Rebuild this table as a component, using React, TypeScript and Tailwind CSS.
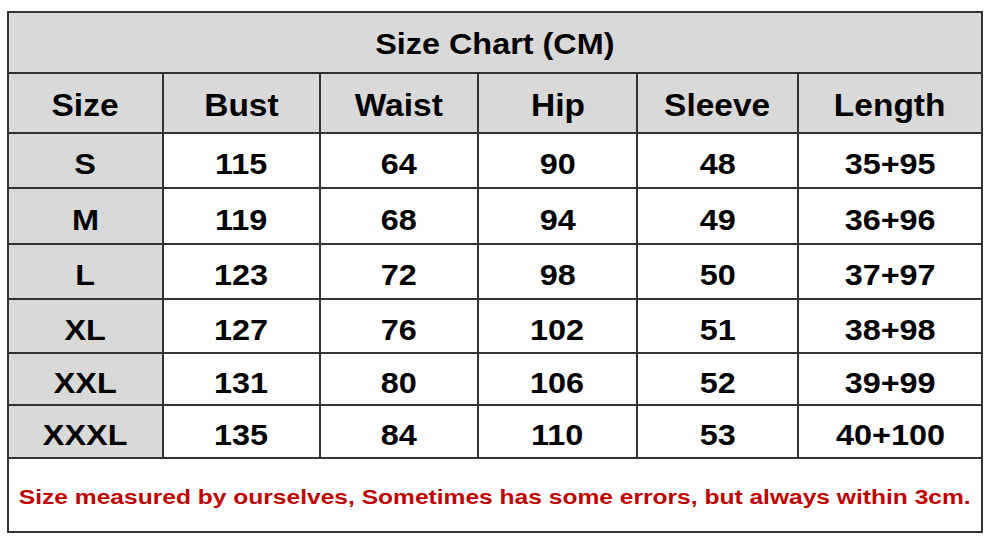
const columns = ['Size', 'Bust', 'Waist', 'Hip', 'Sleeve', 'Length']

const widths = ['w-[155px]', 'w-[157px]', 'w-[158px]', 'w-[159px]', 'w-[161px]', 'flex-1']

const rows = [
  { h: 'h-[55px]', cells: ['S', '115', '64', '90', '48', '35+95'] },
  { h: 'h-[56px]', cells: ['M', '119', '68', '94', '49', '36+96'] },
  { h: 'h-[55px]', cells: ['L', '123', '72', '98', '50', '37+97'] },
  { h: 'h-[54px]', cells: ['XL', '127', '76', '102', '51', '38+98'] },
  { h: 'h-[52px]', cells: ['XXL', '131', '80', '106', '52', '39+99'] },
  { h: 'h-[53px]', cells: ['XXXL', '135', '84', '110', '53', '40+100'] },
]

export default function App() {
  return (
    <div className="h-[544px] w-[1000px] bg-white pl-[7px] pt-[11px] font-['Liberation_Sans',Arial,sans-serif] font-bold text-black">
      <div className="flex h-[522px] w-[976px] flex-col border-2 border-[#333]">
        <div className="flex h-[61px] items-center justify-center border-b-2 border-[#333] bg-[#d9d9d9] pt-[3px]">
          <span className="inline-block scale-x-[1.08] text-[30px] leading-none">Size Chart (CM)</span>
        </div>

        <div className="flex h-[60px] border-b-2 border-[#333] bg-[#d9d9d9]">
          {columns.map((c, i) => (
            <div
              key={c}
              className={`${widths[i]} flex items-center justify-center pt-[5px] ${i < 5 ? 'border-r-2 border-[#333]' : ''}`}
            >
              <span className="inline-block scale-x-[1.08] text-[31px] leading-none">{c}</span>
            </div>
          ))}
        </div>

        {rows.map((r) => (
          <div key={r.cells[0]} className={`${r.h} flex border-b-2 border-[#333]`}>
            {r.cells.map((v, i) => (
              <div
                key={i}
                className={`${widths[i]} flex items-center justify-center pt-[7px] ${i === 0 ? 'bg-[#d9d9d9]' : ''} ${i < 5 ? 'border-r-2 border-[#333]' : ''}`}
              >
                <span className="inline-block scale-x-[1.08] text-[30px] leading-none">{v}</span>
              </div>
            ))}
          </div>
        ))}

        <div className="flex flex-1 items-center justify-center pt-[2px]">
          <span className="inline-block scale-x-[1.17] whitespace-nowrap text-[21px] leading-none text-[#c00000]">
            Size measured by ourselves, Sometimes has some errors, but always within 3cm.
          </span>
        </div>
      </div>
    </div>
  )
}
